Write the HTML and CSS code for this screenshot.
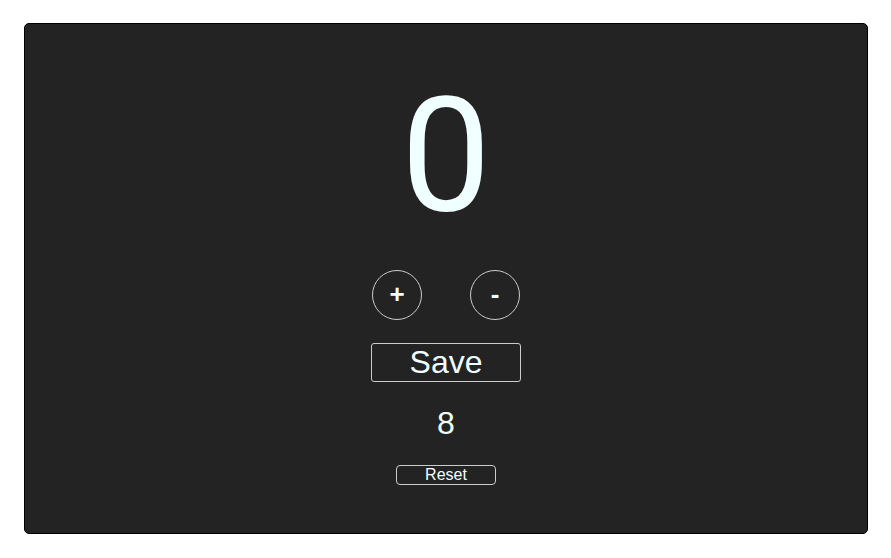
FILE: index.html
```html
<!DOCTYPE html>
<html>
<head>
<meta charset="utf-8">
<link rel="stylesheet" href="styles.css">
</head>
<body>
<div class="card">
  <div class="count">0</div>
  <div class="controls">
    <button class="round">+</button>
    <button class="round">-</button>
  </div>
  <button class="save">Save</button>
  <div class="saved">8</div>
  <button class="reset">Reset</button>
</div>
</body>
</html>
```
FILE: styles.css
```css
html, body { margin: 0; padding: 0; background: #fff; }
body { padding: 23px 23px 24px 24px; box-sizing: border-box; height: 558px; }
.card {
  box-sizing: border-box;
  height: 511px;
  background: #232323;
  border: 1px solid #000;
  border-radius: 5px;
  display: flex;
  flex-direction: column;
  align-items: center;
  color: #f0ffff;
  font-family: "Liberation Sans", Arial, sans-serif;
}
.count {
  font-family: Roboto, "Noto Sans", sans-serif;
  font-size: 160px;
  line-height: 1;
  margin-top: 52px;
  height: 168px;
}
.controls {
  display: flex;
  gap: 48px;
  margin-top: 26px;
}
button {
  background: transparent;
  color: #f0ffff;
  font-family: "Liberation Sans", Arial, sans-serif;
  padding: 0;
  cursor: pointer;
}
.round {
  width: 50px;
  height: 50px;
  border-radius: 50%;
  border: 1px solid #ccc;
  font-size: 26px;
  font-weight: bold;
  line-height: 1;
  padding-bottom: 3px;
}
.save {
  margin-top: 23px;
  width: 150px;
  height: 39px;
  border: 1px solid #ccc;
  border-radius: 3px;
  font-size: 32px;
  line-height: 1;
  padding-bottom: 2px;
}
.saved {
  margin-top: 23px;
  font-size: 32px;
  line-height: 37px;
}
.reset {
  margin-top: 23px;
  width: 100px;
  height: 20px;
  border: 1px solid #ccc;
  border-radius: 4px;
  font-size: 16px;
  line-height: 1;
}
```
